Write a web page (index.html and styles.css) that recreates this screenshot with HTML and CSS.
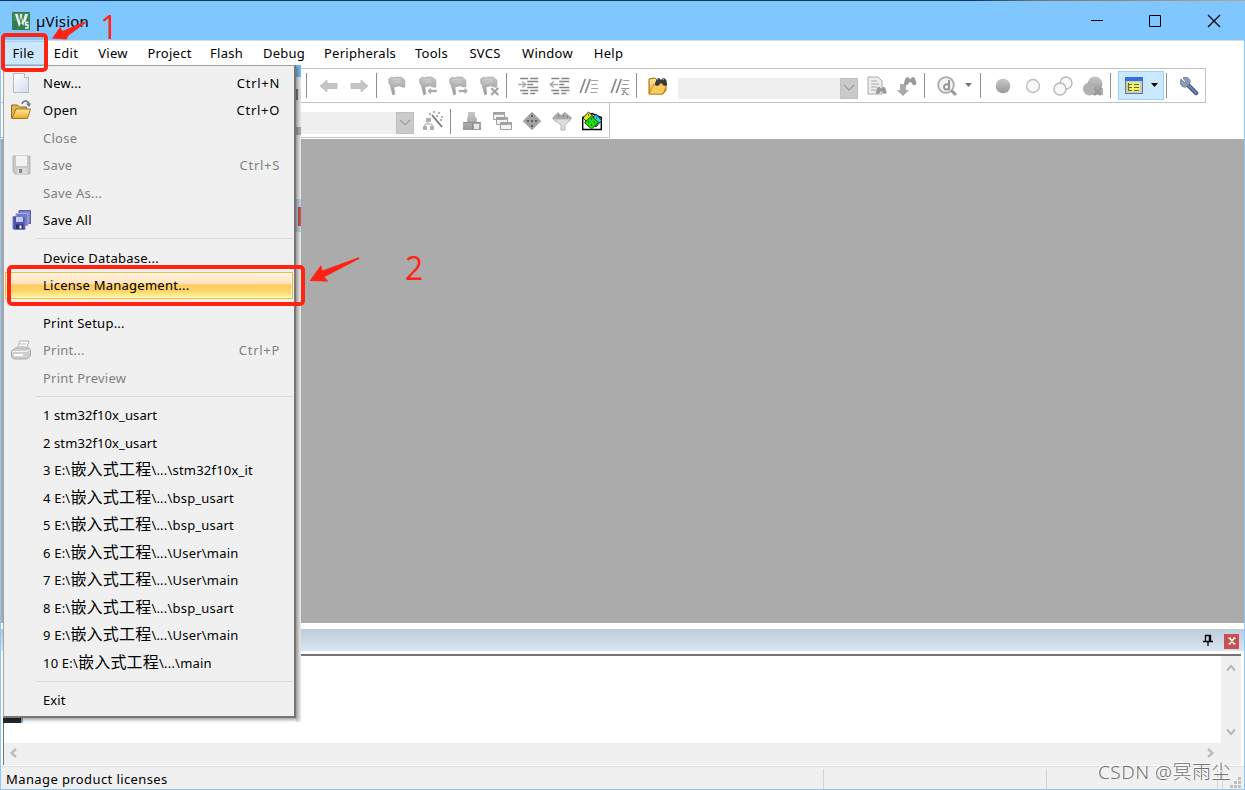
FILE: index.html
```html
<!DOCTYPE html>
<html lang="zh-CN">
<head>
    <meta charset="UTF-8">
    <meta name="viewport" content="width=device-width, initial-scale=1.0">
    <title>µVision</title>
    <link rel="stylesheet" href="styles.css">
</head>
<body>
    <!-- Shared icon shapes -->
    <svg width="0" height="0" class="defs">
        <defs>
            <linearGradient id="grey" x1="0" y1="0" x2="0" y2="1"><stop offset="0" stop-color="#c8c8c8"/><stop offset="1" stop-color="#999"/></linearGradient>
            <linearGradient id="gold" x1="0" y1="0" x2="0" y2="1"><stop offset="0" stop-color="#ffe9a0"/><stop offset="1" stop-color="#eaa928"/></linearGradient>
            <linearGradient id="paper" x1="0" y1="0" x2="1" y2="1"><stop offset="0" stop-color="#ffffff"/><stop offset="1" stop-color="#d3dbec"/></linearGradient>
            <g id="flag"><path d="M1.500 3l3-2 2 1c3-2 5 0 7-1l4 3v7c-3 1-4-2-7-1l-4 1 1 7-2 1L3 9 1.500 7z" fill="url(#grey)" stroke="#a6a6a6" stroke-width=".8"/><path d="M5 4c3-1 5 0 8 0M6 7c2-1 4-1 7-1" stroke="#d2d2d2" fill="none"/></g>
            <g id="binoc"><path d="M1 8l2-6 3-1 1 2h2l1-2 3 1 2 6-1 2h-3L9 7H7l-2 3H2z"/></g>
        </defs>
    </svg>

    <div class="window">
        <div class="titlebar">
            <svg class="app-icon" width="18" height="18" viewBox="0 0 18 18"><rect width="18" height="18" rx="1" fill="#327d50"/><rect x="1" y="1" width="16" height="8" fill="#43875b"/><path d="M3 2h3l1 7 1-7h2l1 7 2-7h3l-4 12-3-3-2 4z" fill="#e8f2e8"/><path d="M7 2l2 9M11 2l-2 9" stroke="#43875b"/><path d="M12 10h6v8h-7z" fill="#327d50"/><path d="M16.500 10.500h-3v2.500h2.500v3h-3" stroke="#fff" stroke-width="1.300" fill="none"/></svg>
            <span class="title">µVision</span>
            <div class="window-buttons">
                <svg width="14" height="14" viewBox="0 0 14 14"><path d="M1 6.500h12" stroke="#000"/></svg>
                <svg width="14" height="14" viewBox="0 0 14 14"><path d="M1.500 1.500h11v11h-11z" stroke="#000" fill="none"/></svg>
                <svg width="14" height="14" viewBox="0 0 14 14"><path d="M1 1l12 12M13 1L1 13" stroke="#000" stroke-width="1.200"/></svg>
            </div>
        </div>

        <div class="menubar">
            <span class="active">File</span><span>Edit</span><span>View</span><span>Project</span><span>Flash</span><span>Debug</span><span>Peripherals</span><span>Tools</span><span>SVCS</span><span>Window</span><span>Help</span>
        </div>

        <div class="toolbar toolbar-file">
            <div class="group nav">
                <svg class="tool" viewBox="0 0 20 20"><path d="M1 10l7-6v3.500h10v5H8V16z" fill="#c6c6c6" stroke="#b4b4b4" stroke-width=".7"/></svg>
                <svg class="tool" viewBox="0 0 20 20"><path d="M19 10l-7-6v3.500H2v5h10V16z" fill="#c6c6c6" stroke="#b4b4b4" stroke-width=".7"/></svg>
            </div>
            <div class="group bookmarks">
                <svg class="tool" viewBox="0 0 20 20"><use href="#flag"/></svg>
                <svg class="tool" viewBox="0 0 20 20"><use href="#flag"/><path d="M9 15l4-4v2.500h6v3h-6V19z" fill="#aaa" stroke="#fff" stroke-width=".7"/></svg>
                <svg class="tool" viewBox="0 0 20 20"><use href="#flag"/><path d="M20 15l-4-4v2.500h-6v3h6V19z" fill="#aaa" stroke="#fff" stroke-width=".7"/></svg>
                <svg class="tool" viewBox="0 0 20 20"><use href="#flag"/><path d="M12 12l7 7M19 12l-7 7" stroke="#a0a0a0" stroke-width="2"/></svg>
            </div>
            <div class="group indent">
                <svg class="tool" viewBox="0 0 20 20"><path d="M2 2.500h8M12 2.500h8M9 5.500h11M9 8.500h6M9 11.500h11M2 14.500h8M12 14.500h8M4 17.500h6M12 17.500h5" stroke="#858585" stroke-width="1.500"/><path d="M0 8.500h7M4 5.500l3.500 3L4 11.500" stroke="#aaa" stroke-width="1.500" fill="none"/></svg>
                <svg class="tool" viewBox="0 0 20 20"><path d="M2 2.500h8M12 2.500h8M10 5.500h10M10 8.500h5M10 11.500h10M2 14.500h8M12 14.500h8M4 17.500h6M12 17.500h5" stroke="#858585" stroke-width="1.500"/><path d="M1 8.500h8M4.500 5.500L1 8.500l3.500 3" stroke="#aaa" stroke-width="1.500" fill="none"/></svg>
                <svg class="tool" viewBox="0 0 20 20"><path d="M1 17L6 3M6 17l5-14" stroke="#8c8c8c" stroke-width="1.800"/><path d="M12 4.500h7M12 8.500h6M12 12.500h7M11 16.500h7" stroke="#a0a0a0" stroke-width="1.200"/></svg>
                <svg class="tool" viewBox="0 0 20 20"><path d="M1 17L6 3M6 17l5-14" stroke="#8c8c8c" stroke-width="1.800"/><path d="M13 4.500h6M12 8.500h6M11 12.500h8M16 12l-4 7M12 14l6 5M11 18.500h3M16 18.500h3" stroke="#9a9a9a" stroke-width="1.200"/></svg>
            </div>
            <div class="group find">
                <svg class="tool" viewBox="0 0 20 20"><path d="M1 3l6-1 2 2h9v10l-3 4H1z" fill="url(#gold)" stroke="#98640a"/><path d="M1 18L6 8h13l-4 10z" fill="#fbc95a" stroke="#b67c16" stroke-width=".7"/><g transform="translate(6 1) scale(.88)" fill="#383838"><use href="#binoc"/></g><path d="M9 4l1-1M15 4l1-1" stroke="#aaa" stroke-width="1.200"/></svg>
                <div class="combo"><i><svg width="12" height="8" viewBox="0 0 12 8"><path d="M1 1l5 5 5-5" fill="none" stroke="#9c9c9c" stroke-width="1.200"/></svg></i></div>
                <svg class="tool" viewBox="0 0 20 20"><path d="M1 1h10l4 4v13H1z" fill="#ededed" stroke="#aaa"/><path d="M4 5h6M4 8h8M4 11h6M4 14h5" stroke="#aaa"/><g transform="translate(8 10) scale(.78)" fill="#999"><use href="#binoc"/></g></svg>
                <svg class="tool" viewBox="0 0 20 20"><path d="M3 8h6v6h3l-6 6-6-6h3z" fill="#a9a9a9"/><g transform="translate(6 0) scale(.9)" fill="#999"><use href="#binoc"/></g></svg>
            </div>
            <div class="group debug">
                <svg class="tool" viewBox="0 0 20 20"><circle cx="9" cy="9" r="7.800" fill="#f3f3f3" stroke="#aaa" stroke-width="1.800"/><path d="M14 14l5 5" stroke="#999" stroke-width="3"/><path d="M12 4v10M11.500 8.500c-6-2-6 7 0 4.500" stroke="#969696" stroke-width="2" fill="none"/></svg>
                <svg class="caret" width="7" height="5" viewBox="0 0 7 5"><path d="M0 0h7L3.500 4z" fill="#777"/></svg>
            </div>
            <div class="group breakpoints">
                <svg class="tool" viewBox="0 0 20 20"><circle cx="10" cy="10" r="7.300" fill="url(#grey)"/></svg>
                <svg class="tool" viewBox="0 0 20 20"><circle cx="10" cy="10" r="6.500" fill="#f8f8f8" stroke="#bdbdbd" stroke-width="1.400"/></svg>
                <svg class="tool" viewBox="0 0 20 20"><circle cx="13" cy="7" r="6" fill="#f8f8f8" stroke="#b9b9b9" stroke-width="1.400"/><circle cx="7" cy="13" r="6" fill="#f8f8f8" stroke="#b9b9b9" stroke-width="1.400"/></svg>
                <svg class="tool" viewBox="0 0 20 20"><circle cx="12" cy="8" r="7.500" fill="url(#grey)"/><circle cx="6.500" cy="13" r="6.500" fill="#b0b0b0"/><path d="M10 12h10v7H8z" fill="#b0b0b0"/><path d="M11 12l7 7M18 12l-7 7" stroke="#999" stroke-width="2.500"/></svg>
            </div>
            <div class="group views">
                <div class="view-button">
                    <svg width="18" height="17" viewBox="0 0 18 17"><rect x=".5" y=".5" width="17" height="16" fill="#c5cbd0" stroke="#66778c"/><rect width="18" height="4" fill="#3470dc"/><rect x="2.500" y="5.500" width="12.500" height="9" fill="#f3f26a"/><path d="M3.500 6v8M4 7.500h3M4 10.500h3M4 13.500h3M9 7.500h5M9 10.500h5M9 13.500h5" stroke="#646b24" stroke-width="1.200"/></svg>
                    <svg width="7" height="5" viewBox="0 0 7 5"><path d="M0 0h7L3.500 4z" fill="#000"/></svg>
                </div>
            </div>
            <div class="group config">
                <svg class="tool" viewBox="0 0 20 20"><path d="M8 8l9 9" stroke="#445a85" stroke-width="4.500" stroke-linecap="round"/><path d="M8 8l9 9" stroke="#7085ad" stroke-width="2" stroke-linecap="round"/><path d="M2 3l4 4 1-1-3-4c4-2 8 1 7 5l-4 4c-4 1-7-3-5-8z" fill="#8d9cb7" stroke="#617294" stroke-width=".8"/></svg>
            </div>
        </div>

        <div class="toolbar toolbar-build">
            <div class="combo"><i><svg width="12" height="8" viewBox="0 0 12 8"><path d="M1 1l5 5 5-5" fill="none" stroke="#9c9c9c" stroke-width="1.200"/></svg></i></div>
            <svg class="tool wand" viewBox="0 0 20 20"><path d="M9 4l10 12" stroke="#777" stroke-width="1.800"/><path d="M10 1h2M15 2h2M13 5h2M18 6h2M17 9h2M6 3h2" stroke="#999" stroke-width="1.600"/><path d="M5 8v5M2 18v-5h7v5" stroke="#aaa" fill="none"/><path d="M3 7h5v4H3zM0 15h4v4H0zM7 15h4v4H7z" fill="#b0b0b0"/></svg>
            <div class="group packs">
                <svg class="tool" viewBox="0 0 20 20"><path d="M6 1h7v4l2 3v3h4v8H1v-8h4V8l1-3z" fill="url(#grey)"/><path d="M1 11.500h18M10.500 12v7" stroke="#8c8c8c"/><path d="M12 13h5v5h-5z" fill="#e9e9e9"/></svg>
                <svg class="tool" viewBox="0 0 20 20"><g fill="#f3f3f3" stroke="#a1a1a1"><path d="M1.500 1.500h11v7h-11zM4.500 6.500h11v7h-11zM8.500 11.500h11v7h-11z"/><path d="M1 2.500h12M4 7.500h12M8 12.500h12" stroke-width="2.500"/></g></svg>
                <svg class="tool" viewBox="0 0 20 20"><path d="M10 1l9 9-9 9-9-9z" fill="#a2a2a2" stroke="#bbb"/><path d="M9 4h2v2H9zM5 9h2v2H5zM9 9h2v2H9zM13 9h2v2h-2zM9 14h2v2H9z" fill="#606060"/></svg>
                <svg class="tool" viewBox="0 0 20 20"><path d="M0 7l6-6 3 3 4-3 7 6-3 4H4z" fill="#aaa"/><path d="M6 5h1M11 5h1M15 6h1" stroke="#777" stroke-width="2"/><path d="M1 8h18l-6 6v5H9v-5z" fill="#dedede" stroke="#aaa" stroke-width=".8"/></svg>
                <svg class="tool" viewBox="0 0 20 20"><path d="M.700 6.500L10 2.500l9.300 4v12H.700z" fill="#fff" stroke="#000" stroke-width="1.400"/><path d="M6.500 1L13 7l-6 6-6-6z" fill="#e9e717" stroke="#333"/><path d="M14 3l5.500 6.500L14 16 9 9.500z" fill="#20d9ec" stroke="#124"/><path d="M9.500 5l7 6.500-7 6.500-7-6.500z" fill="#27dd09" stroke="#084b00"/><path d="M9 8h1M6 11h1M12 11h1M9 14h1M6 4h1M14 7h1" stroke="#043" stroke-width="1.300"/></svg>
            </div>
        </div>

        <div class="workspace"></div>

        <div class="output">
            <div class="caption">
                <svg width="10" height="12" viewBox="0 0 10 12"><path d="M2.500 1v6M2 1.500h6M0 7.500h10M5 8v4" stroke="#000" stroke-width="1.300"/><path d="M7 1v6" stroke="#000" stroke-width="2.400"/></svg>
                <span class="close"><svg width="8" height="8" viewBox="0 0 8 8"><path d="M1.500 1l5 6M6.500 1l-5 6M.500 1.200h2.500M5 1.200h2.500M.500 6.800h2.500M5 6.800h2.500" stroke="#fff" stroke-width="1.400"/></svg></span>
            </div>
            <div class="output-body">
                <div class="output-text"></div>
                <div class="vscroll">
                    <svg width="10" height="9" viewBox="0 0 10 9"><path d="M1 7.500l4-4.500 4 4.500" stroke="#bcbcbc" stroke-width="2.400" fill="none"/></svg>
                    <svg width="10" height="9" viewBox="0 0 10 9"><path d="M1 1.500L5 6l4-4.500" stroke="#bcbcbc" stroke-width="2.400" fill="none"/></svg>
                </div>
            </div>
            <div class="hscroll">
                <svg width="9" height="10" viewBox="0 0 9 10"><path d="M7 1L2.500 5 7 9" stroke="#bcbcbc" stroke-width="2.400" fill="none"/></svg>
                <svg width="9" height="10" viewBox="0 0 9 10"><path d="M2 1l4.500 4L2 9" stroke="#bcbcbc" stroke-width="2.400" fill="none"/></svg>
            </div>
        </div>

        <div class="statusbar">
            <span class="message">Manage product licenses</span>
            <span class="pane pane-mid"></span>
            <span class="pane pane-right"></span>
            <span class="pane pane-small"></span>
            <span class="pane pane-grip"><svg width="12" height="12" viewBox="0 0 12 12"><path d="M8 0h3v3H8zM4 4h3v3H4zM8 4h3v3H8zM0 8h3v3H0zM4 8h3v3H4zM8 8h3v3H8z" fill="#c0c0c0"/></svg></span>
        </div>
    </div>

    <!-- Parts of the docked panes showing beside the open menu -->
    <div class="backdrop">
        <i class="tab-blue"></i><i class="tab-text"></i><i class="band"></i><i class="pane-head"></i><i class="pane-close"></i>
    </div>
    <i class="icon-rest"></i>

    <!-- File menu -->
    <div class="file-menu">
        <div class="item"><svg class="icon" viewBox="0 0 20 20"><path d="M2.500.500h11l4 4v15h-15z" fill="url(#paper)" stroke="#b5bac5"/><path d="M13.500.500v4h4" fill="#fff" stroke="#b5bac5"/></svg><span>New...</span><kbd>Ctrl+N</kbd></div>
        <div class="item"><svg class="icon" viewBox="0 0 20 20"><path d="M.500 5h6l2 2h7v11h-15z" fill="#e5b34c" stroke="#8f6b22"/><path d="M1 18.500L5 9h14.500l-3 9.500z" fill="url(#gold)" stroke="#a3741a"/><path d="M11 4c1-4 6-4 7 0" stroke="#62758d" stroke-width="1.600" fill="none"/><path d="M15 3.500h5L18 7z" fill="#62758d"/></svg><span>Open</span><kbd>Ctrl+O</kbd></div>
        <div class="item disabled"><i class="icon"></i><span>Close</span></div>
        <div class="item disabled"><svg class="icon" viewBox="0 0 20 20"><path d="M2 1h17v18H4l-2-2z" fill="#c9c9c9" stroke="#b5b5b5"/><path d="M5 1h11v10H5z" fill="#f3f3f3"/><path d="M6 13h10v6H6z" fill="#dadada"/><path d="M8 14h3v4H8z" fill="#888"/></svg><span>Save</span><kbd>Ctrl+S</kbd></div>
        <div class="item disabled"><i class="icon"></i><span>Save As...</span></div>
        <div class="item"><svg class="icon" viewBox="0 0 20 20"><path d="M8 .500h11.500v13H8z" fill="#8082d0" stroke="#5659a4"/><path d="M5 3.500h12v12H5z" fill="#7478c9" stroke="#aaaee6"/><path d="M2 6.500h12v13H3l-1-1z" fill="#4f53b0" stroke="#7378c6"/><path d="M5 7h7v5H5z" fill="#c5cdf4"/><path d="M5 14.500h7v4.500H5z" fill="#2c3068"/><path d="M8.500 15.500h2v3h-2z" fill="#fff"/></svg><span>Save All</span></div>
        <div class="separator"></div>
        <div class="item"><i class="icon"></i><span>Device Database...</span></div>
        <div class="item selected"><i class="icon"></i><span>License Management...</span></div>
        <div class="separator hidden"></div>
        <div class="item"><i class="icon"></i><span>Print Setup...</span></div>
        <div class="item disabled"><svg class="icon" viewBox="0 0 20 20"><path d="M6 9l3-8h9l-3 9z" fill="#f6f6f6" stroke="#b5b5b5"/><path d="M9 4h6M8 6.500h6" stroke="#c8c8c8"/><path d="M.500 11l4-3h13.500l1.500 2v6L16 19H3l-2.500-2z" fill="#cecece" stroke="#a9a9a9"/><path d="M1 11.500h14l4-2" stroke="#f5f5f5" fill="none"/><path d="M3 14h9v2H3z" fill="#fff"/></svg><span>Print...</span><kbd>Ctrl+P</kbd></div>
        <div class="item disabled"><i class="icon"></i><span>Print Preview</span></div>
        <div class="separator"></div>
        <div class="item recent"><i class="icon"></i><span>1 stm32f10x_usart</span></div>
        <div class="item recent"><i class="icon"></i><span>2 stm32f10x_usart</span></div>
        <div class="item recent path"><i class="icon"></i><span>3 E:\<b>嵌入式工程</b>\...\stm32f10x_it</span></div>
        <div class="item recent path"><i class="icon"></i><span>4 E:\<b>嵌入式工程</b>\...\bsp_usart</span></div>
        <div class="item recent path"><i class="icon"></i><span>5 E:\<b>嵌入式工程</b>\...\bsp_usart</span></div>
        <div class="item recent path"><i class="icon"></i><span>6 E:\<b>嵌入式工程</b>\...\User\main</span></div>
        <div class="item recent path"><i class="icon"></i><span>7 E:\<b>嵌入式工程</b>\...\User\main</span></div>
        <div class="item recent path"><i class="icon"></i><span>8 E:\<b>嵌入式工程</b>\...\bsp_usart</span></div>
        <div class="item recent path"><i class="icon"></i><span>9 E:\<b>嵌入式工程</b>\...\User\main</span></div>
        <div class="item recent path"><i class="icon"></i><span>10 E:\<b>嵌入式工程</b>\...\main</span></div>
        <div class="separator"></div>
        <div class="item recent"><i class="icon"></i><span>Exit</span></div>
    </div>

    <!-- Step marks -->
    <div class="mark mark-file"></div>
    <div class="mark mark-license"></div>
    <svg class="arrows" width="370" height="290" viewBox="0 0 370 290">
        <path d="M52 38.500L60 27l2.500 4L85 21.500q1.500 0 .500 1.500L68.500 35.500l-2 4z" fill="#ff2314"/>
        <path d="M309.500 281L321 265l1.500 5.500L358 257.500q3 0 1 1.500L324.500 277l4 4.500z" fill="#ff2314"/>
    </svg>
    <span class="step step-one">1</span>
    <span class="step step-two">2</span>
    <span class="watermark">CSDN @冥雨尘</span>
</body>
</html>
```
FILE: styles.css
```css
* {
    box-sizing: border-box;
}
body {
    position: relative;
    width: 1245px;
    height: 790px;
    margin: 0;
    overflow: hidden;
    font-family: "Noto Sans", "Noto Sans CJK SC", sans-serif;
    font-size: 13px;
    letter-spacing: 0.25px;
    color: #000;
    background-color: #fff;
}
svg {
    display: block;
    flex: none;
}
.defs {
    position: absolute;
}
.window {
    display: flex;
    flex-direction: column;
    height: 790px;
    border: 1px solid #8cc8f8;
    border-top: none;
}

/* Title bar */
.titlebar {
    display: flex;
    align-items: center;
    height: 40px;
    margin: 0 -1px;
    padding: 1px 24px 0 12px;
    background: linear-gradient(90deg, #063a58 0 78%, #6e756f 83%, #b5aa98) top / 100% 1px no-repeat #80c6ff;
}
.title {
    margin-left: 6px;
    font-size: 15px;
    letter-spacing: 0.2px;
}
.window-buttons {
    display: flex;
    gap: 44.500px;
    margin-left: auto;
}
.window-buttons svg:nth-child(2) {
    margin: 0 1px 0 -1px;
}

/* Menu bar */
.menubar {
    display: grid;
    grid-template-columns: 43px 42px 52px 61px 53px 62px 90px 53px 54px 71px 51px;
    height: 28px;
    padding-left: 1px;
    border-top: 1px solid #dcdcdc;
    line-height: 25px;
    text-align: center;
}
.menubar .active {
    height: 24px;
    background-color: #cce8ff;
    border: 1px solid #99d1ff;
    line-height: 23px;
}

/* Toolbars */
.toolbar {
    display: flex;
    align-items: center;
    border: 1px solid #c3c3c3;
    border-left: none;
}
.toolbar-file {
    width: 1205px;
    height: 35px;
    padding-left: 305px;
}
.toolbar-build {
    width: 609px;
    height: 35px;
    padding: 2px 0 0 300px;
    border-top: none;
}
.group {
    display: flex;
    align-items: center;
    height: 25px;
    border-left: 1px solid #8e8e8e;
}
.tool {
    width: 30px;
    height: 20px;
}
.nav {
    width: 70px;
    padding-left: 7px;
}
.bookmarks {
    width: 130px;
    padding-left: 5px;
}
.bookmarks .tool, .indent .tool {
    width: 30.500px;
}
.indent {
    width: 130px;
    padding-left: 6px;
}
.find {
    width: 288px;
    padding-left: 6px;
}
.find .combo {
    width: 180px;
    margin: 5px 4px 0 5px;
}
.combo {
    display: flex;
    justify-content: flex-end;
    height: 21px;
    background-color: #efefef;
}
.combo i {
    display: flex;
    align-items: center;
    justify-content: center;
    width: 18px;
    background-color: #cacaca;
    border: 1px solid #c0c0c0;
}
.debug {
    width: 56px;
    padding-left: 7px;
}
.caret {
    margin-left: 3px;
}
.breakpoints {
    width: 130px;
    padding-left: 7px;
}
.views {
    width: 56px;
    padding-left: 7px;
}
.view-button {
    display: flex;
    align-items: center;
    gap: 8px;
    width: 46px;
    height: 29px;
    padding-left: 6px;
    background-color: #cce8ff;
    border: 1px solid #99d1ff;
}
.config {
    padding-left: 7px;
}
.toolbar-build .combo {
    width: 113px;
    height: 22px;
    margin-top: 4px;
}
.wand {
    margin: 0 2px 0 4px;
}
.packs {
    padding-left: 6px;
}

/* Editor area and output pane */
.workspace {
    flex: none;
    height: 484px;
    margin-top: 1px;
    background-color: #ababab;
}
.output {
    flex: none;
    height: 143px;
    padding-top: 6px;
}
.caption {
    display: flex;
    align-items: center;
    justify-content: flex-end;
    gap: 11px;
    height: 22px;
    padding-right: 5px;
    background: linear-gradient(#bdccdb, #d8e4f1);
}
.close {
    display: flex;
    align-items: center;
    justify-content: center;
    width: 15px;
    height: 15px;
    margin: 2px 0 0;
    background-color: #c75050;
}
.output-body {
    display: flex;
    height: 89px;
    margin: 3px 3px 0 2px;
    border-top: 2px solid #747474;
    border-left: 1px solid #747474;
}
.output-text {
    flex: 1;
    background-color: #fff;
}
.vscroll {
    display: flex;
    flex-direction: column;
    justify-content: space-between;
    align-items: center;
    width: 20px;
    padding: 7px 0 6px;
    background-color: #f0f0f0;
}
.hscroll {
    display: flex;
    align-items: center;
    justify-content: space-between;
    height: 22px;
    margin: 0 3px 0 2px;
    padding: 0 26px 2px 5px;
    background-color: #f0f0f0;
    border-left: 1px solid #747474;
}
.statusbar {
    display: flex;
    flex: 1;
    padding-top: 2px;
    background-color: #f0f0f0;
    border-top: 1px solid #dedede;
}
.message {
    width: 822px;
    padding-left: 5px;
    line-height: 20px;
    letter-spacing: 0.4px;
}
.pane {
    height: 20px;
    border-left: 1px solid #d4d4d4;
}
.pane-mid {
    width: 223px;
}
.pane-right {
    width: 171px;
}
.pane-small {
    width: 5px;
}
.pane-grip {
    padding: 8px 0 0 7px;
}

/* File menu */
.file-menu {
    position: absolute;
    left: 3px;
    top: 65px;
    width: 293px;
    height: 653px;
    padding: 3px 1px 0;
    background-color: #f0f0f0;
    border: 1px solid #a0a0a0;
    border-right: 2px solid #777;
    border-bottom: 2px solid #777;
    box-shadow: 2px 2px 3px rgba(0, 0, 0, 0.35);
}
.item {
    display: flex;
    align-items: center;
    height: 27.500px;
    padding: 0 0 0.500px 6px;
    white-space: nowrap;
}
.icon {
    width: 20px;
    height: 20px;
}
.item span {
    margin-left: 12px;
}
.item kbd {
    margin-left: auto;
    padding-right: 13px;
    font: inherit;
    letter-spacing: 0.7px;
}
.disabled {
    color: #808080;
}
.selected {
    background: linear-gradient(#fff3e4, #ffe3b5 42%, #ffcb60 48%, #ffd467 70%, #fff7a0);
    border: 1px solid #eebb35;
    padding: 0 0 0 5px;
    box-shadow: inset 0 0 0 1px rgba(255, 255, 255, 0.5);
}
.recent {
    letter-spacing: 0.1px;
}
.path {
    padding-bottom: 3px;
    letter-spacing: 0.2px;
}
.path b {
    font-family: "Noto Sans CJK SC", sans-serif;
    font-size: 16px;
    font-weight: 400;
    line-height: 20px;
}
.separator {
    height: 10px;
    margin-left: 31px;
    background: linear-gradient(#d9d9d9, #d9d9d9) 0 4px / 100% 1px no-repeat;
}
.separator.hidden {
    background: none;
}

/* Pane pieces next to the menu */
.backdrop {
    position: absolute;
    left: 296px;
    top: 65px;
    width: 5px;
    height: 657px;
    background-color: #e6e6e6;
}
.backdrop i {
    position: absolute;
    left: 0;
    width: 5px;
}
.tab-blue {
    top: 0;
    height: 12px;
    background-color: #71b9f1;
}
.tab-text {
    top: 24px;
    height: 11px;
    background: linear-gradient(90deg, #8d7387 2px, #ddd 2px);
}
.band {
    top: 62px;
    height: 8px;
    background-color: #aaa;
}
.pane-head {
    top: 134px;
    height: 33px;
    background-color: #bfd0e2;
}
.backdrop .pane-close {
    left: 2px;
    top: 142px;
    width: 3px;
    height: 19px;
    background-color: #c75050;
}
.icon-rest {
    position: absolute;
    left: 3px;
    top: 717px;
    width: 20px;
    height: 6px;
    background-color: #25282c;
    border-right: 2px solid #6db5ea;
}

/* Step marks */
.mark {
    position: absolute;
    border: 4px solid #ff2314;
    border-radius: 5px;
}
.mark-file {
    left: 1px;
    top: 33px;
    width: 47px;
    height: 39px;
}
.mark-license {
    left: 7px;
    top: 265px;
    width: 298px;
    height: 41px;
}
.arrows {
    position: absolute;
    left: 0;
    top: 0;
}
.step {
    position: absolute;
    font-family: "Open Sans", sans-serif;
    font-size: 32px;
    line-height: 26px;
    letter-spacing: 0;
    color: #ff2314;
}
.step-one {
    left: 100px;
    top: 14px;
}
.step-two {
    left: 405px;
    top: 255px;
}
.watermark {
    position: absolute;
    left: 1098px;
    top: 758px;
    font-size: 19px;
    font-weight: 300;
    letter-spacing: 0.5px;
    line-height: 28px;
    white-space: nowrap;
    color: #707070;
    text-shadow: -1px -1px 0 #fff;
}
```
